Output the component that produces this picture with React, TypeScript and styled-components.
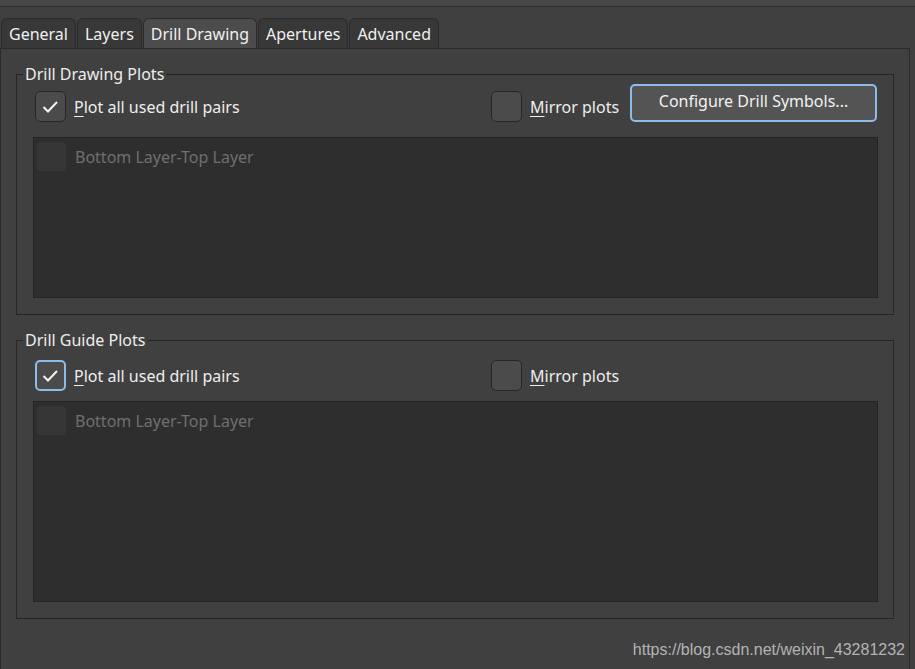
import React from 'react'
import styled, { createGlobalStyle } from 'styled-components'

const Global = createGlobalStyle`
    html, body {
        margin: 0;
        padding: 0;
        background: #404040;
        font-family: "Noto Sans", "Open Sans", sans-serif;
        color: #ececec;
        overflow: hidden;
    }
`

const Window = styled.div`
    width: 915px;
    height: 669px;
    position: relative;
    display: flex;
    flex-direction: column;
`

const TopStrip = styled.div`
    height: 6px;
    background: #474747;
    border-bottom: 1px solid #2c2c2c;
`

const TabBar = styled.div`
    margin-top: 11px;
    display: flex;
    gap: 1px;
    height: 30px;
    padding-left: 1px;
`

const Tab = styled.div<{ $active?: boolean }>`
    display: flex;
    align-items: center;
    padding: 0 7px 0 7px;
    font-size: 16px;
    color: #f0f0f0;
    background: ${p => p.$active ? '#4c4c4c' : '#383838'};
    border: 1px solid #2a2a2a;
    border-bottom: none;
    border-radius: 6px 6px 0 0;
`

const Panel = styled.div`
    flex: 1;
    margin-right: 5px;
    border: 1px solid #2a2a2a;
    border-bottom: none;
    padding: 15px 15px 0 15px;
    display: flex;
    flex-direction: column;
    gap: 15px;
`

const GroupBox = styled.fieldset<{ $top: number }>`
    margin: 0;
    border: 1px solid #262626;
    padding: ${p => p.$top}px 15px 16px 16px;
    min-width: 0;
    > legend {
        font-size: 16px;
        line-height: 20px;
        padding: 0 2px;
        margin-left: -10px;
        color: #eeeeee;
    }
`

const Row = styled.div`
    display: grid;
    grid-template-columns: 456px auto 1fr;
    align-items: end;
    height: 38px;
    padding-left: 2px;
    margin-right: 1px;
`

const CheckLabel = styled.label<{ $disabled?: boolean }>`
    display: flex;
    align-items: center;
    gap: 8px;
    font-size: 16px;
    color: ${p => p.$disabled ? '#6f6f6f' : '#eeeeee'};
    > span > u {
        text-decoration-thickness: 1px;
        text-underline-offset: 3px;
    }
`

const Box = styled.span<{ $focus?: boolean; $disabled?: boolean }>`
    width: 31px;
    height: 31px;
    box-sizing: border-box;
    border-radius: 5px;
    border: ${p => p.$focus ? '2px solid #8cbdea' : p.$disabled ? '1px solid #303030' : '1px solid #262626'};
    background: ${p => p.$disabled ? '#363636' : '#4b4b4b'};
    display: flex;
    align-items: center;
    justify-content: center;
    flex-shrink: 0;
`

const Button = styled.button`
    justify-self: end;
    width: 247px;
    height: 38px;
    border: 2px solid #8cbdea;
    border-radius: 5px;
    background: #545454;
    color: #f2f2f2;
    font-family: "Noto Sans", "Open Sans", sans-serif;
    font-size: 16px;
    padding: 0 0 4px 0;
`

const List = styled.div<{ $gap: number; $h: number }>`
    margin-top: ${p => p.$gap}px;
    height: ${p => p.$h}px;
    box-sizing: border-box;
    background: #2e2e2e;
    border: 1px solid #242424;
    padding: 3px 2px;
`

const Watermark = styled.div`
    position: absolute;
    right: 10px;
    bottom: 10px;
    font-family: "Liberation Sans", Arial, sans-serif;
    font-size: 16px;
    color: #b4b4b4;
`

function Check({ checked, focus, disabled }: { checked?: boolean; focus?: boolean; disabled?: boolean }) {
    return (
        <Box $focus={focus} $disabled={disabled}>
            {checked && (
                <svg width="31" height="31" viewBox="0 0 31 31" style={{ margin: focus ? -2 : -1 }}>
                    <polyline points="8.5,16 13,20.5 22,11" fill="none" stroke="#f4f4f4" strokeWidth="2" />
                </svg>
            )}
        </Box>
    )
}

function Group({ title, top, gap, h, button, focus }: { title: string; top: number; gap: number; h: number; button?: boolean; focus?: boolean }) {
    return (
        <GroupBox $top={top}>
            <legend>{title}</legend>
            <Row>
                <CheckLabel><Check checked focus={focus} /><span><u>P</u>lot all used drill pairs</span></CheckLabel>
                <CheckLabel><Check /><span><u>M</u>irror plots</span></CheckLabel>
                {button && <Button>Configure Drill Symbols...</Button>}
            </Row>
            <List $gap={gap} $h={h}>
                <CheckLabel $disabled><Check disabled /><span>Bottom Layer-Top Layer</span></CheckLabel>
            </List>
        </GroupBox>
    )
}

export default function App() {
    const tabs = ['General', 'Layers', 'Drill Drawing', 'Apertures', 'Advanced']
    return (
        <>
            <Global />
            <Window>
                <TopStrip />
                <TabBar>
                    {tabs.map(t => <Tab key={t} $active={t === 'Drill Drawing'}>{t}</Tab>)}
                </TabBar>
                <Panel>
                    <Group title="Drill Drawing Plots" top={0} gap={15} h={161} button />
                    <Group title="Drill Guide Plots" top={3} gap={10} h={201} focus />
                </Panel>
                <Watermark>https://blog.csdn.net/weixin_43281232</Watermark>
            </Window>
        </>
    )
}
